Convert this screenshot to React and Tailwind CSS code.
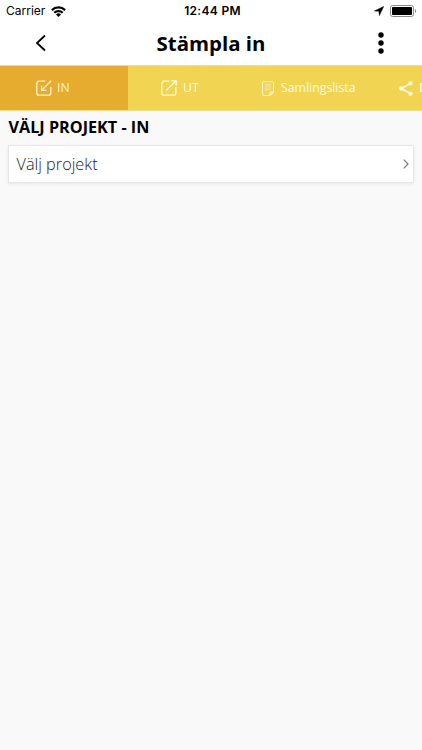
import { useState } from 'react';

const InIcon = () => (
    <svg width="16" height="16" viewBox="0 0 16 16" fill="none" stroke="currentColor" strokeWidth="1.3">
        <path d="M9.4 1.2H3A2.2 2.2 0 0 0 .8 3.4V13A2.2 2.2 0 0 0 3 15.2h9.6a2.2 2.2 0 0 0 2.2-2.2V7" />
        <path d="M15.2.8 5.6 10.4M5.6 5.6v4.8h4.8" />
    </svg>
);

const OutIcon = () => (
    <svg width="16" height="16" viewBox="0 0 16 16" fill="none" stroke="currentColor" strokeWidth="1.3">
        <path d="M8.6 1.2H3A2.2 2.2 0 0 0 .8 3.4V13A2.2 2.2 0 0 0 3 15.2h9.6a2.2 2.2 0 0 0 2.2-2.2V7" />
        <path d="M5.2 10.6 14.8 1M10.4.8h4.8v4.8" />
    </svg>
);

const ListIcon = () => (
    <svg width="12" height="15" viewBox="0 0 12 15" fill="none" stroke="currentColor" strokeWidth="1" opacity=".85">
        <path d="M1.5.6h9a1 1 0 0 1 1 1v10L8.4 14.4H1.5a1 1 0 0 1-1-1V1.6a1 1 0 0 1 1-1z" />
        <path d="M8 14.2v-3.2h3.4z" fill="currentColor" fillOpacity=".5" />
        <path d="M2.8 3.5h6.4M2.8 5.3h6.4M2.8 7.1h6.4M2.8 8.9h5.4" strokeOpacity=".6" />
    </svg>
);

const ShareIcon = () => (
    <svg width="14" height="15" viewBox="0 0 14 15" fill="currentColor">
        <path d="M11.5 2.4 2.4 7.5l9.1 5.1" fill="none" stroke="currentColor" strokeWidth="1.6" />
        <circle cx="11.4" cy="2.4" r="2.2" />
        <circle cx="2.4" cy="7.5" r="2.3" />
        <circle cx="11.4" cy="12.6" r="2.2" />
    </svg>
);

const TABS = [
    { id: 'in', label: 'IN', icon: InIcon, className: 'w-[128px] pl-[36px] gap-[5px]' },
    { id: 'ut', label: 'UT', icon: OutIcon, className: 'w-[126px] pl-[33px] gap-[6px]' },
    { id: 'list', label: 'Samlingslista', icon: ListIcon, className: 'w-[127px] pl-[8px] gap-[7px]' },
    { id: 'share', label: 'Dela', icon: ShareIcon, className: 'w-[128px] pl-[18px] gap-[6px] font-semibold' },
];

function StatusBar() {
    return (
        <div className="grid h-[22px] grid-cols-3 items-center pl-[6px] pr-[5px] font-['Inter',sans-serif] text-[12px] leading-none">
            <div className="flex items-center gap-[6px]">
                <span className="text-[12px]">Carrier</span>
                <svg width="15" height="11" viewBox="0 0 15 11" fill="none" stroke="currentColor" strokeWidth="2.2">
                    <path d="M.9 4.1a9.4 9.4 0 0 1 13.2 0" />
                    <path d="M3.3 6.8a6 6 0 0 1 8.4 0" />
                    <path d="M7.5 11 5 8.6a3.5 3.5 0 0 1 5 0z" fill="currentColor" stroke="none" />
                </svg>
            </div>
            <span className="pl-[2px] text-center text-[12px] font-semibold tracking-[0.3px] whitespace-nowrap">12:44 PM</span>
            <div className="flex items-center justify-end gap-[6px]">
                <svg width="10" height="10" viewBox="0 0 10 10" fill="currentColor" stroke="currentColor" strokeWidth=".5">
                    <path d="M9.7.4 5.4 9.6 4.9 5.2.4 5z" />
                </svg>
                <svg width="27" height="12" viewBox="0 0 27 12">
                    <rect x=".5" y=".5" width="23" height="11" rx="2.2" fill="#fff" stroke="#8a8a8a" />
                    <rect x="2" y="2" width="20" height="8" rx=".8" fill="#000" />
                    <path d="M25 4v4c1.6-.6 1.6-3.4 0-4z" fill="#888" />
                </svg>
            </div>
        </div>
    );
}

export default function App() {
    const [activeTab, setActiveTab] = useState('in');

    return (
        <div className="flex h-screen flex-col overflow-hidden bg-[#f9f9f9] font-['Open_Sans',sans-serif] text-black">
            <header className="bg-white">
                <StatusBar />
                <div className="flex h-[43px] items-center justify-between pb-px pl-[35px] pr-[38px]">
                    <button aria-label="Tillbaka">
                        <svg width="12" height="18" viewBox="0 0 12 18" fill="none" stroke="currentColor" strokeWidth="1.8">
                            <path d="M10 1.5 2 9l8 7.5" />
                        </svg>
                    </button>
                    <h1 className="pr-[3px] text-[20.4px] leading-none font-bold">Stämpla in</h1>
                    <button aria-label="Meny">
                        <svg width="6" height="22" viewBox="0 0 6 22" fill="currentColor">
                            <circle cx="3" cy="3" r="2.7" />
                            <circle cx="3" cy="11" r="2.7" />
                            <circle cx="3" cy="19" r="2.7" />
                        </svg>
                    </button>
                </div>
            </header>

            {/* Tabs */}
            <nav className="flex h-[46px] shrink-0 overflow-hidden border-y border-[#f0dc8c] bg-[#f0d452]">
                {TABS.map(({ id, label, icon: Icon, className }) => (
                    <button
                        key={id}
                        onClick={() => setActiveTab(id)}
                        className={`flex h-full shrink-0 items-center text-[12.3px] whitespace-nowrap ${className} ${activeTab === id ? 'bg-[#e5ac30] text-[#fdf1d2]' : 'text-[#fffbe0]'}`}
                    >
                        <Icon />
                        <span>{label}</span>
                    </button>
                ))}
            </nav>

            <main className="px-2 pt-[7px]">
                <h2 className="pl-[0.5px] text-[16.2px] leading-[18px] font-bold">VÄLJ PROJEKT - IN</h2>
                <button className="mt-[9px] flex h-[38px] w-full items-center justify-between border border-[#e6e6e6] bg-white pl-[7.5px] pr-[4.5px] shadow-[0_1px_3px_rgba(0,0,0,0.08)]">
                    <span className="pt-px text-[16.3px] font-light text-[#222]">Välj projekt</span>
                    <svg width="6" height="10" viewBox="0 0 6 10" fill="none" stroke="#777" strokeWidth="1.2">
                        <path d="M.8.7 5 5 .8 9.3" />
                    </svg>
                </button>
            </main>
        </div>
    );
}
